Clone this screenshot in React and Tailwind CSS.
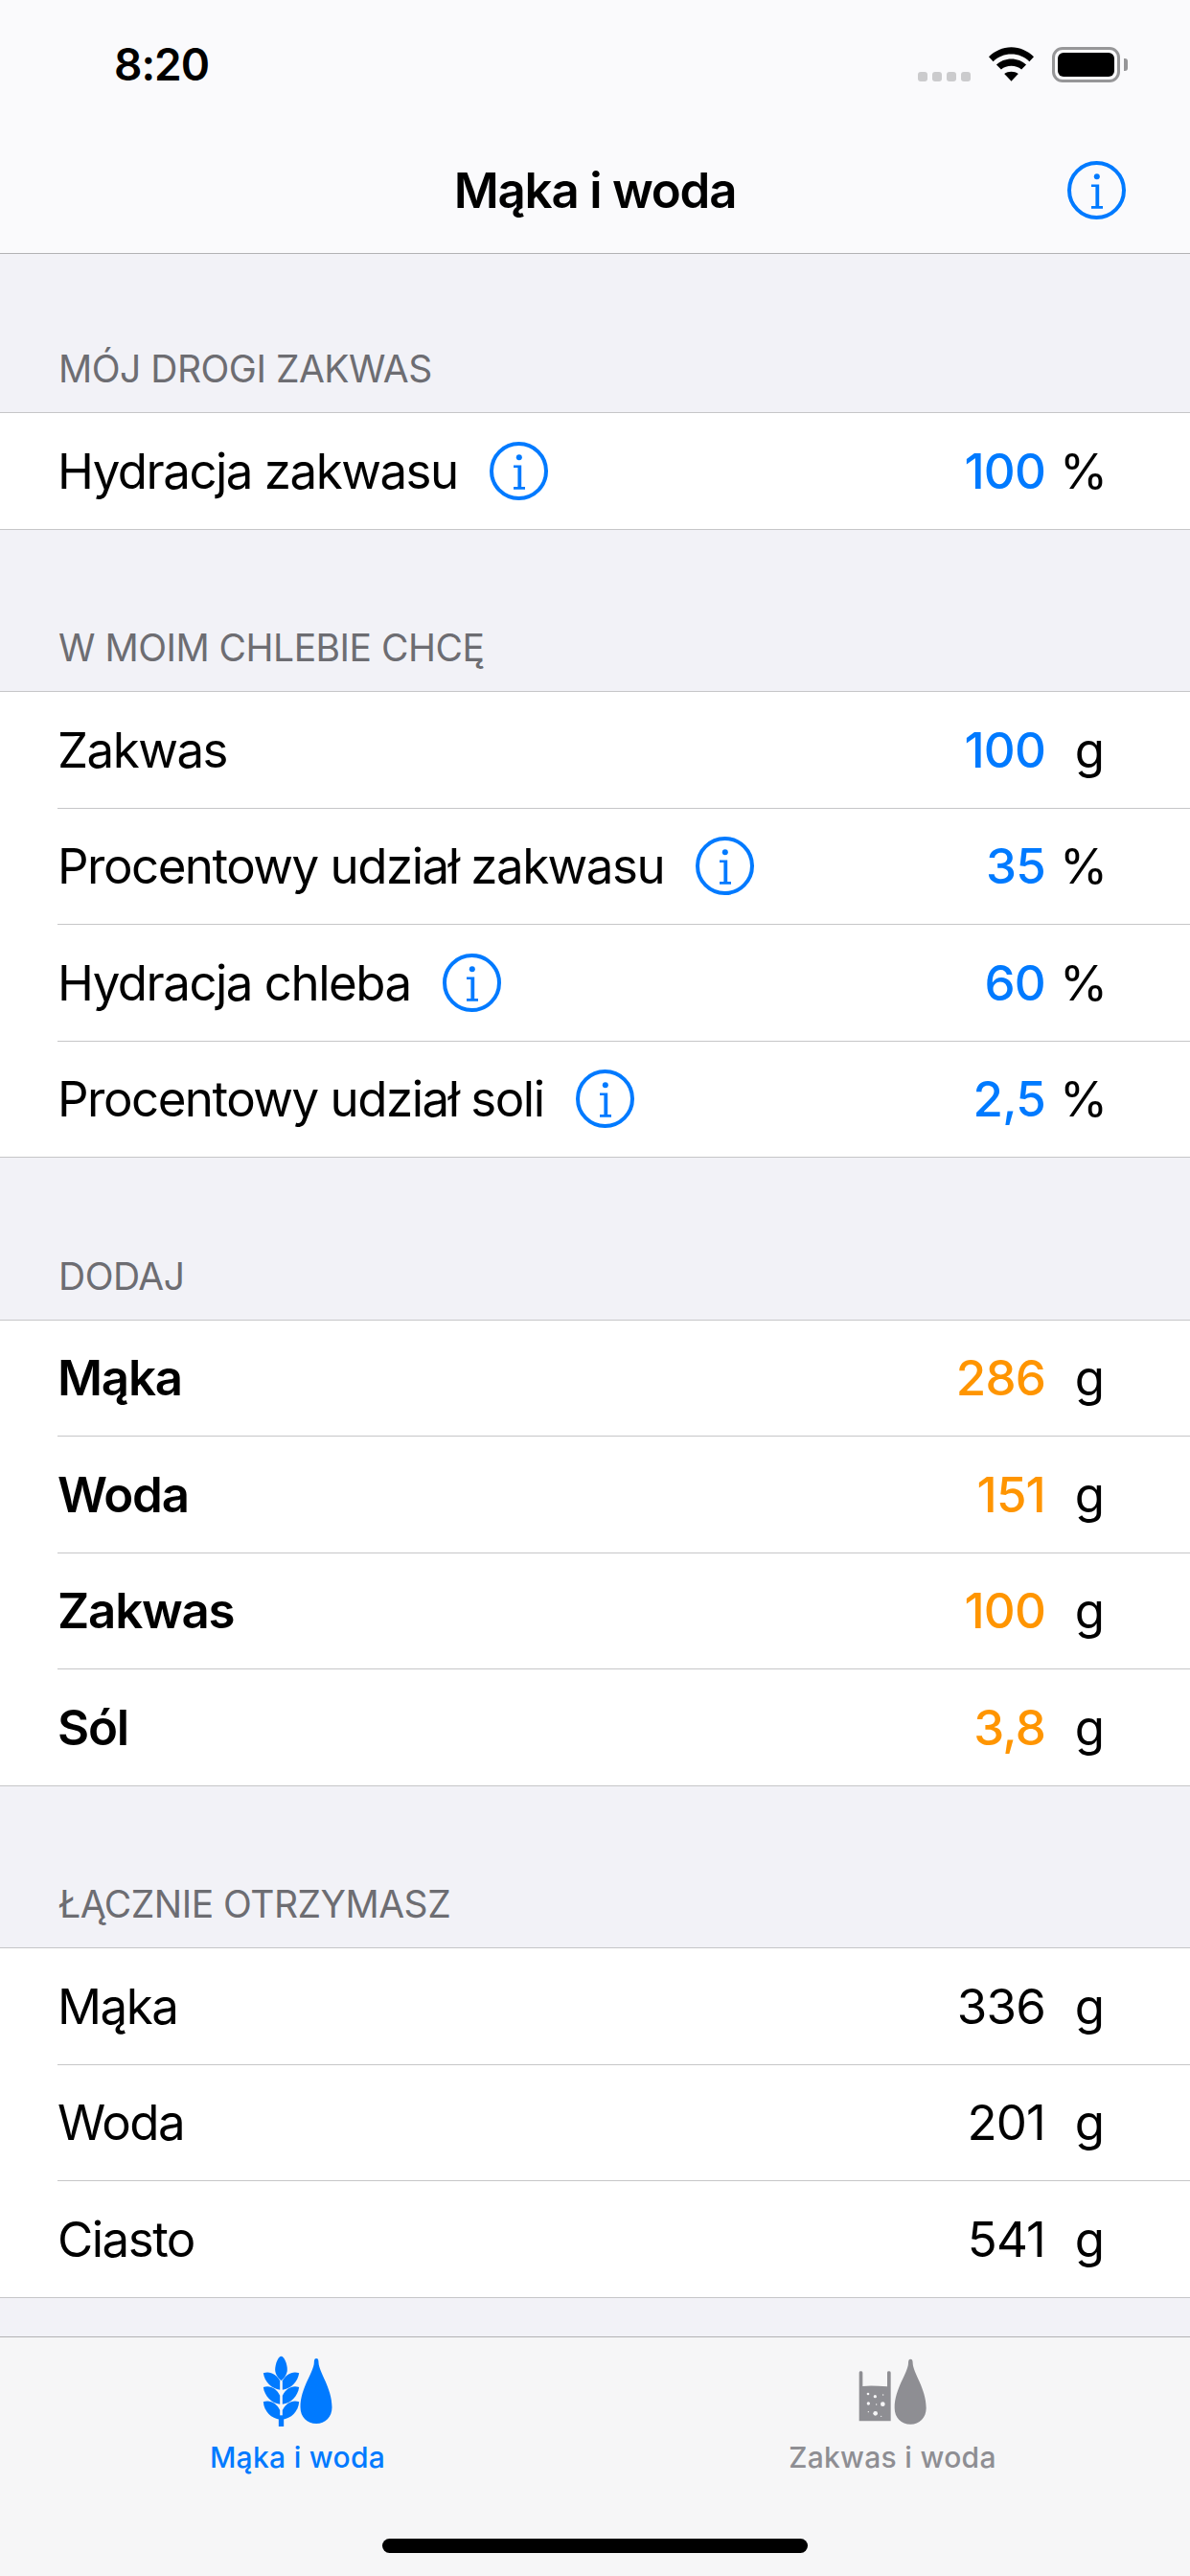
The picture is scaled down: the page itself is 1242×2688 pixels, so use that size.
const Info = () => (
  <svg width="61" height="61" viewBox="0 0 61 61" className="shrink-0 block" fill="none">
    <circle cx="30.5" cy="30.5" r="28.5" stroke="#007aff" strokeWidth="4" />
    <circle cx="30.8" cy="16.3" r="3" fill="#007aff" />
    <path d="M25 24.4h8.2v22.7h3.8v2.7H25v-2.7h4.4V27H25z" fill="#007aff" />
  </svg>
);

const DROP = "M452 122C458 122 459 128 459 135C460 165 501 215 501 275C501 305 480 326 452 326C423 326 402 305 402 275C402 215 444 165 445 135C445 128 446 122 452 122Z";

const WheatLeaves = () => (
  <>
    <path d="M286 168C306 160 328 172 338 192L338 220C312 218 290 195 286 168Z" />
    <path d="M286 212C306 204 328 216 338 238L338 265C312 263 290 240 286 212Z" />
    <path d="M286 258C306 250 328 262 338 284L338 313C312 311 288 288 286 258Z" />
  </>
);

const FlourWater = () => (
  <svg width="75" height="74" viewBox="282 113 222 222" className="block" fill="#007aff">
    <path d="M342 115C352 115 361 140 361 157C361 172 350 185 342 191C334 185 323 172 323 157C323 140 332 115 342 115Z" />
    <WheatLeaves />
    <g transform="translate(684 0) scale(-1 1)"><WheatLeaves /></g>
    <rect x="334" y="300" width="16" height="35" />
    <path d={DROP} />
  </svg>
);

const StarterWater = () => (
  <svg width="71" height="74" viewBox="322 113 213 222" className="block" fill="#8e8e93">
    <path d="M324 166Q324 162 329 162Q335 162 335 166V209Q360 206 412 210V166Q412 162 417 162Q423 162 423 166V318H324Z" />
    <g fill="#f6f6f7">
      <circle cx="352" cy="233" r="4" />
      <circle cx="374" cy="241" r="5" />
      <circle cx="399" cy="236" r="2" />
      <circle cx="353" cy="263" r="5" />
      <circle cx="378" cy="266" r="2" />
      <circle cx="398" cy="265" r="7" />
      <circle cx="353" cy="289" r="2" />
      <circle cx="375" cy="294" r="7" />
      <circle cx="393" cy="303" r="2" />
    </g>
    <path d={DROP} transform="translate(33 2)" />
  </svg>
);

const Wifi = () => (
  <svg width="47" height="36" viewBox="396 88 142 107" className="block" fill="#000">
    <path d="M396 118C415 100 440 88 467 88C494 88 519 100 538 118L524 133C508 118 489 110 467 110C445 110 426 118 410 133Z" />
    <path d="M420 143C432 132 449 125 467 125C485 125 502 132 514 143L499 158C490 151 479 147 467 147C455 147 444 151 435 158Z" />
    <path d="M445 172C451 167 459 165 467 165C475 165 483 167 489 172L467 195Z" />
  </svg>
);

const Row = ({ label, value, unit, info, last, bold, color = "text-[#007aff]" }) => (
  <div className={`h-[121.5px] border-b border-[#c6c6c8] flex items-center ${last ? "pl-[60px]" : "ml-[60px]"} pr-[89px]`}>
    <span className={`text-[51px] leading-none text-black ${bold ? "font-semibold tracking-[-1.2px]" : "font-normal tracking-[-1.5px]"}`}>{label}</span>
    {info && <span className="ml-[33px] block"><Info /></span>}
    <span className={`ml-auto text-[51px] leading-none tracking-[-0.8px] font-medium ${color}`}>{value}</span>
    <span className={`w-[62px] text-right text-[51px] leading-none text-black ${unit === "%" ? "translate-x-[3px]" : ""}`}>{unit}</span>
  </div>
);

const Section = ({ title, first, rows, ...rest }) => (
  <section>
    <div className={`${first ? "h-[165px]" : "h-[168.5px]"} flex items-end pl-[61px] pb-[21px]`}>
      <span className="text-[39px] leading-[48px] tracking-[-0.5px] text-[#6d6d72]">{title}</span>
    </div>
    <div className="bg-white border-t border-[#c6c6c8]">
      {rows.map((r, i) => (
        <Row key={i} {...r} {...rest} last={i === rows.length - 1} />
      ))}
    </div>
  </section>
);

const O = "text-[#ff9500]";
const K = "text-black font-normal";

export default function App() {
  return (
    <div className="w-[1242px] h-[2688px] overflow-hidden flex flex-col bg-[#f2f2f7] font-['Inter',sans-serif] antialiased">
      <header className="h-[265px] shrink-0 bg-[#fafafc] border-b border-[#b2b2b4]">
        <div className="h-[132px] flex items-start pt-[49px] pl-[119px] pr-[65px]">
          <span className="text-[46px] leading-[37px] font-semibold tracking-[-1px] text-black">8:20</span>
          <div className="ml-auto flex items-start">
            <div className="flex gap-[5px] mt-[26px]">
              <span className="w-[10px] h-[10px] rounded-[3px] bg-[#cbcbcd]" />
              <span className="w-[10px] h-[10px] rounded-[3px] bg-[#cbcbcd]" />
              <span className="w-[10px] h-[10px] rounded-[3px] bg-[#cbcbcd]" />
              <span className="w-[10px] h-[10px] rounded-[3px] bg-[#cbcbcd]" />
            </div>
            <div className="ml-[19px]"><Wifi /></div>
            <div className="ml-[19px] flex items-center">
              <div className="w-[71px] h-[37px] rounded-[11px] border-[3px] border-[#969698] p-[3px]">
                <div className="w-full h-full rounded-[6px] bg-black" />
              </div>
              <div className="ml-[4px] w-[4px] h-[13px] rounded-r-[3px] bg-[#969698]" />
            </div>
          </div>
        </div>
        <div className="h-[132px] grid grid-cols-[1fr_auto_1fr] items-center">
          <div />
          <span className="text-[51px] leading-none font-semibold tracking-[-1.2px] text-black">Mąka i woda</span>
          <div className="flex justify-end pr-[67px]"><Info /></div>
        </div>
      </header>
      <main className="flex-1 overflow-hidden">
        <Section first title="MÓJ DROGI ZAKWAS" rows={[{ label: "Hydracja zakwasu", info: true, value: "100", unit: "%" }]} />
        <Section title="W MOIM CHLEBIE CHCĘ" rows={[
          { label: "Zakwas", value: "100", unit: "g" },
          { label: "Procentowy udział zakwasu", info: true, value: "35", unit: "%" },
          { label: "Hydracja chleba", info: true, value: "60", unit: "%" },
          { label: "Procentowy udział soli", info: true, value: "2,5", unit: "%" },
        ]} />
        <Section title="DODAJ" bold color={O} rows={[
          { label: "Mąka", value: "286", unit: "g" },
          { label: "Woda", value: "151", unit: "g" },
          { label: "Zakwas", value: "100", unit: "g" },
          { label: "Sól", value: "3,8", unit: "g" },
        ]} />
        <Section title="ŁĄCZNIE OTRZYMASZ" color={K} rows={[
          { label: "Mąka", value: "336", unit: "g" },
          { label: "Woda", value: "201", unit: "g" },
          { label: "Ciasto", value: "541", unit: "g" },
        ]} />
      </main>
      <footer className="h-[250px] shrink-0 bg-[#f6f6f7] border-t border-[#b2b2b4] flex flex-col">
        <div className="grid grid-cols-2 pt-[19px]">
          <div className="flex flex-col items-center">
            <FlourWater />
            <span className="mt-[14px] text-[30px] leading-[36px] font-medium tracking-[0.3px] text-[#007aff]">Mąka i woda</span>
          </div>
          <div className="flex flex-col items-center">
            <StarterWater />
            <span className="mt-[14px] text-[30px] leading-[36px] font-medium tracking-[0.3px] text-[#8e8e93]">Zakwas i woda</span>
          </div>
        </div>
        <div className="mt-auto mb-[24px] mx-auto w-[444px] h-[15px] rounded-full bg-black" />
      </footer>
    </div>
  );
}
